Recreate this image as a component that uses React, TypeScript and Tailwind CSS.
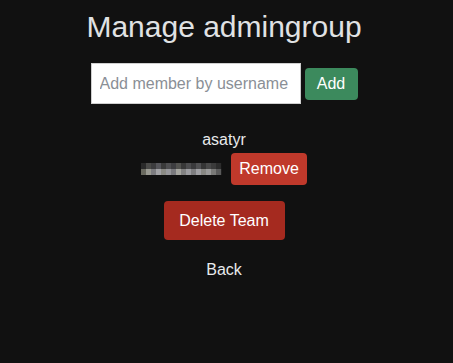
const blurTop = ['#2a2a2a', '#4a4a48', '#3c3c3e', '#55555a', '#3a3a3a', '#4e4e50', '#3d3d40', '#52524f', '#383838', '#4c4c4e', '#3a3a3c', '#505052', '#353535', '#484848', '#3b3b3b', '#2c2c2c'];
const blurBottom = ['#6a6a60', '#9a9a92', '#7c7c80', '#a2a2a6', '#8a8a84', '#96969a', '#7a7a7e', '#a6a6a0', '#828282', '#9c9ca0', '#7e7e80', '#a0a0a4', '#888884', '#9a9a9a', '#7a7a78', '#5a5a5a'];

function Blurred() {
  return (
    <svg width="81" height="12" viewBox="0 0 81 12" className="block">
      {blurTop.map((c, i) => (
        <rect key={'t' + i} x={i * 5} y={0} width={5.2} height={6} fill={c} />
      ))}
      {blurBottom.map((c, i) => (
        <rect key={'b' + i} x={i * 5} y={6} width={5.2} height={6} fill={c} />
      ))}
    </svg>
  );
}

export default function App() {
  return (
    <div
      className="min-h-[363px] w-full pr-[5px] bg-[#111111] flex flex-col items-center text-[#e4e4e4]"
      style={{ fontFamily: '"Liberation Sans", Arial, sans-serif' }}
    >
      <h1 className="mt-[9px] text-[30px] leading-[35px] text-[#e0e2e4]">Manage admingroup</h1>

      <div className="mt-[19px] flex items-center gap-[4px]">
        <input
          type="text"
          placeholder="Add member by username"
          className="w-[210px] h-[41px] bg-white border border-[#cfcfcf] px-[8px] text-[16px] text-[#333] placeholder:text-[#8a8f96] outline-none"
        />
        <button className="h-[32px] w-[53px] rounded-[4px] bg-[#3c8a5d] text-white text-[16px]">Add</button>
      </div>

      <div className="mt-[27px] text-[16px] leading-[18px] text-[#e8eaec]">asatyr</div>

      <div className="mt-[4px] flex items-center gap-[9px]">
        <Blurred />
        <button className="h-[32px] w-[76px] rounded-[4px] bg-[#c0392b] text-white text-[16px]">Remove</button>
      </div>

      <button className="mt-[16px] h-[39px] w-[121px] rounded-[4px] bg-[#a52a1f] text-white text-[16px]">Delete Team</button>

      <div className="mt-[21px] text-[16px] leading-[18px] text-[#e8eaec]">Back</div>
    </div>
  );
}
